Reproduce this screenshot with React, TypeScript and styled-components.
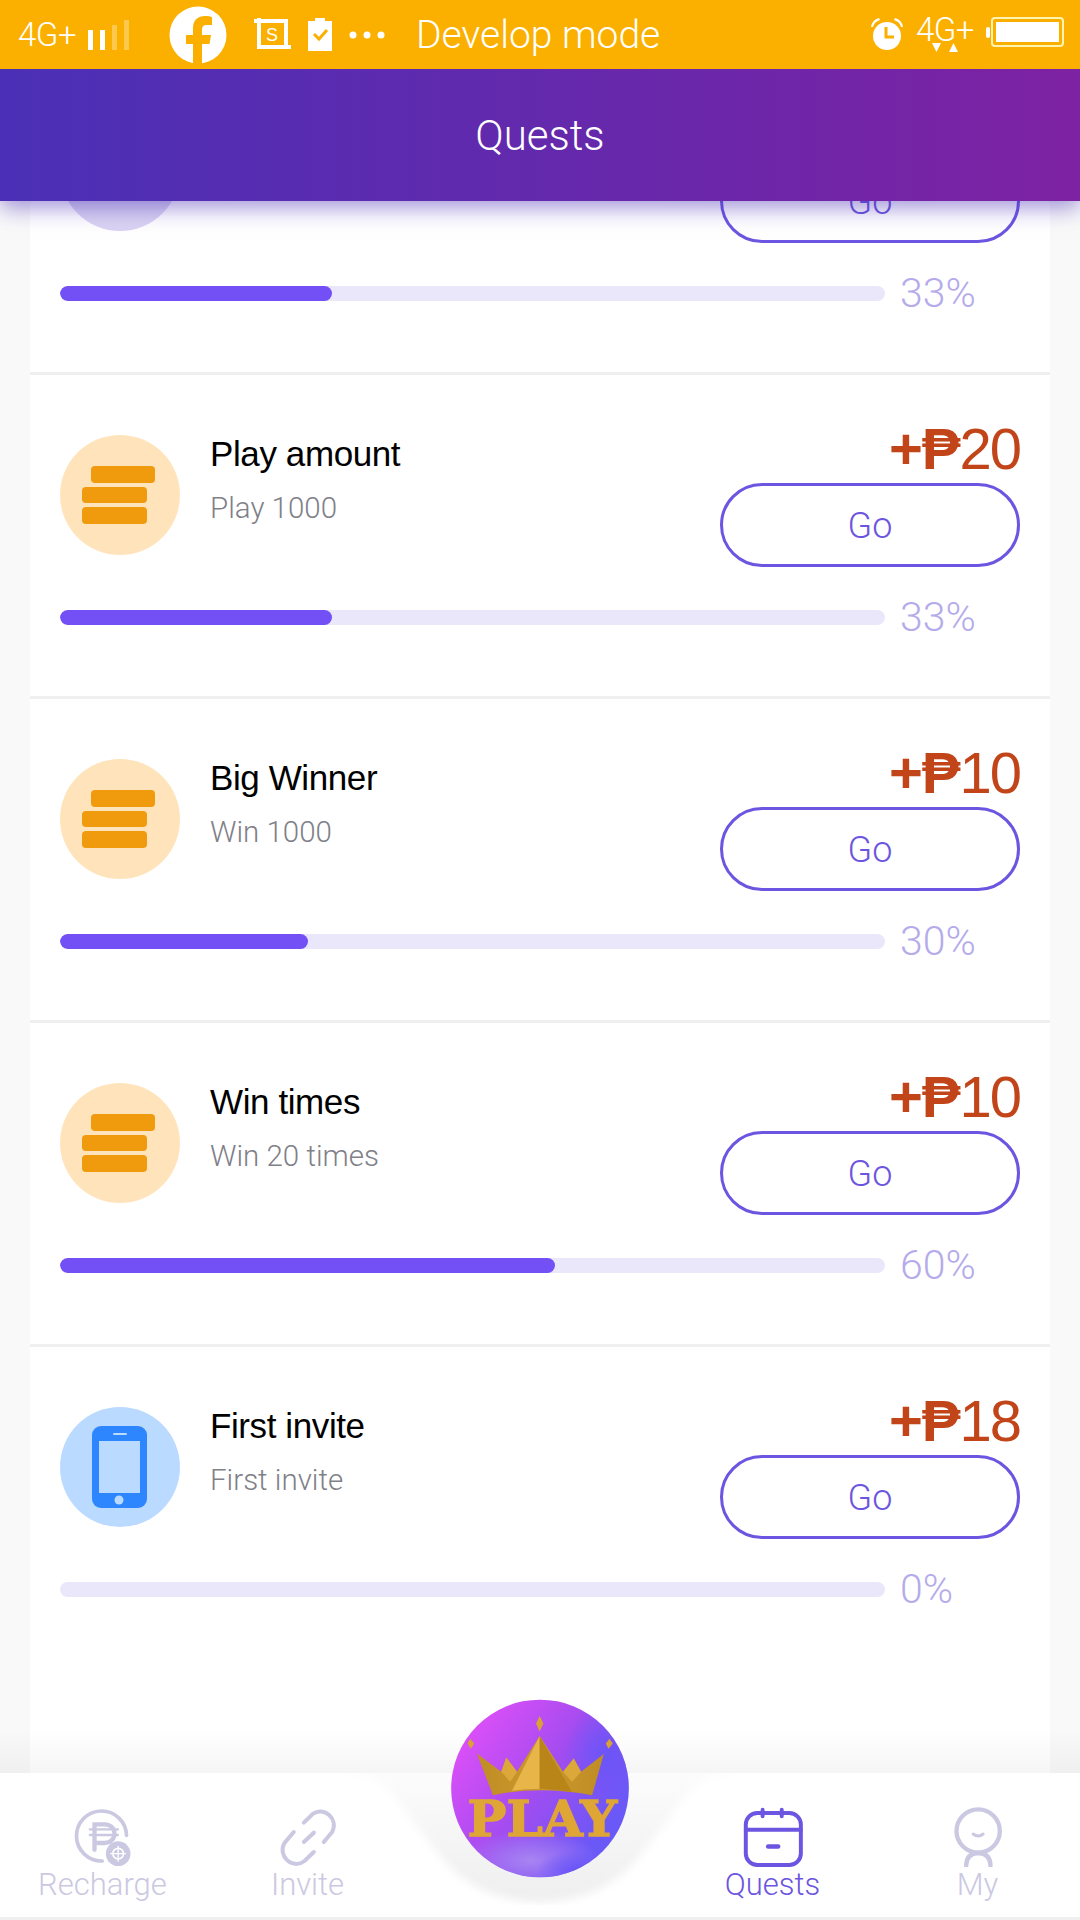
import { createGlobalStyle, styled } from "styled-components";

const GlobalStyle = createGlobalStyle`
  html, body {
    margin: 0;
    padding: 0;
    background: #f9f9f9;
  }
  * {
    box-sizing: border-box;
  }
`;

const LIGHT = `Roboto, "Liberation Sans", sans-serif`;
const SANS = `"Liberation Sans", Arial, sans-serif`;

const Page = styled.div`
  position: relative;
  display: flex;
  flex-direction: column;
  width: 1080px;
  height: 1920px;
  overflow: hidden;
  background: #f9f9f9;
`;

const StatusBar = styled.div`
  position: relative;
  z-index: 3;
  display: flex;
  align-items: center;
  flex-shrink: 0;
  padding: 0 16px 0 18px;
  height: 69px;
  background: #fbb000;
  color: #fff;
`;

const StatusNet = styled.span`
  font-family: ${LIGHT};
  font-size: 33px;
  font-weight: 300;
  letter-spacing: -0.5px;
`;

const StatusMode = styled.span`
  margin-left: 31px;
  font-family: ${LIGHT};
  font-size: 39px;
  font-weight: 300;
`;

const StatusRight = styled.div`
  display: flex;
  align-items: flex-start;
  margin-left: auto;
  gap: 12px;
`;

const NetStack = styled.div`
  display: flex;
  flex-direction: column;
  align-items: center;
  line-height: 26px;
`;

const Header = styled.header`
  position: relative;
  z-index: 2;
  display: flex;
  justify-content: center;
  align-items: center;
  flex-shrink: 0;
  height: 132px;
  background: linear-gradient(90deg, #4a30b6 0%, #7d22a3 100%);
  box-shadow: 0 6px 22px rgba(74, 48, 182, 0.55);
  color: #fff;
  font-family: ${LIGHT};
  font-size: 42px;
  font-weight: 300;
`;

const List = styled.main`
  display: flex;
  flex-direction: column;
  margin: -150px 30px 0;
  background: #fff;
  flex: 1;
`;

const Row = styled.section`
  display: flex;
  flex-direction: column;
  flex-shrink: 0;
  padding: 60px 30px 0;
  height: 324px;
  border-bottom: 3px solid #efefef;

  &:last-child {
    border-bottom: none;
  }
`;

const RowTop = styled.div`
  display: flex;
  height: 158px;
`;

const Badge = styled.div<{ $tone: string }>`
  display: flex;
  flex-shrink: 0;
  width: 120px;
  height: 120px;
  border-radius: 50%;
  background: ${(props) => props.$tone};
`;

const Info = styled.div`
  display: flex;
  flex-direction: column;
  margin-left: 30px;
`;

const Title = styled.div`
  margin-top: -3px;
  color: #000;
  font-family: ${SANS};
  font-size: 35px;
  line-height: 44px;
  letter-spacing: -0.4px;
`;

const Sub = styled.div`
  margin-top: 14px;
  color: #808088;
  font-family: ${LIGHT};
  font-size: 29.5px;
  font-weight: 300;
  line-height: 36px;
`;

const Reward = styled.div`
  display: flex;
  flex-direction: column;
  align-items: flex-end;
  margin-left: auto;
  margin-top: -17px;
`;

const Price = styled.div`
  display: flex;
  align-items: baseline;
  height: 62px;
  color: #c2451a;
  font-family: ${SANS};
  font-size: 58px;
  line-height: 62px;
  letter-spacing: -2px;
`;

const PriceSign = styled.span`
  font-weight: 700;
  letter-spacing: -1px;
`;

const GoButton = styled.button`
  margin-top: 3px;
  padding: 1px 0 0;
  width: 300px;
  height: 84px;
  border: 3px solid #6c55e0;
  border-radius: 42px;
  background: #fff;
  color: #6c55e0;
  font-family: ${LIGHT};
  font-size: 36px;
  font-weight: 300;
`;

const ProgressRow = styled.div`
  display: flex;
  align-items: center;
`;

const Track = styled.div`
  flex-shrink: 0;
  width: 825px;
  height: 15px;
  border-radius: 8px;
  background: #ebe7fb;
  overflow: hidden;
`;

const Fill = styled.div`
  height: 100%;
  border-radius: 8px;
  background: #7350f5;
`;

const Percent = styled.span`
  margin-left: 15px;
  color: #b5abeb;
  font-family: ${LIGHT};
  font-size: 41px;
  font-weight: 300;
`;

const NavShade = styled.div`
  position: absolute;
  left: 0;
  right: 0;
  bottom: 147px;
  height: 44px;
  background: linear-gradient(180deg, rgba(0, 0, 0, 0), rgba(0, 0, 0, 0.04));
`;

const Nav = styled.nav`
  position: absolute;
  left: 0;
  right: 0;
  bottom: 0;
  display: grid;
  grid-template-columns: 205px 205px 260px 205px 205px;
  height: 147px;
`;

const NavShape = styled.svg`
  position: absolute;
  left: 0;
  top: 0;
`;

const NavItem = styled.div<{ $active?: boolean }>`
  position: relative;
  display: flex;
  flex-direction: column;
  align-items: center;
  padding-top: 34px;
  color: ${(props) => (props.$active ? "#6c55e0" : "#cbc8e2")};
  font-family: ${LIGHT};
  font-size: 31px;
  font-weight: 300;
  line-height: 34px;

  svg {
    display: block;
    margin-bottom: 1px;
  }
`;

const PlayButton = styled.svg`
  position: absolute;
  left: 451px;
  top: 1699px;
`;

const Stack = () => (
  <svg width="120" height="120" viewBox="0 0 120 120">
    <rect x="31" y="31" width="64" height="17" rx="4" fill="#f09a0e" />
    <rect x="22" y="52" width="65" height="16" rx="4" fill="#f09a0e" />
    <rect x="22" y="72" width="65" height="17" rx="4" fill="#f09a0e" />
  </svg>
);

const Phone = () => (
  <svg width="120" height="120" viewBox="0 0 120 120">
    <rect x="32" y="19" width="55" height="82" rx="9" fill="#2e86ff" />
    <rect x="39" y="34" width="41" height="52" fill="#bbdaff" />
    <rect x="53" y="26" width="14" height="2" rx="1" fill="#bbdaff" />
    <circle cx="59" cy="93" r="4.5" fill="#bbdaff" />
  </svg>
);

const RechargeIcon = () => (
  <svg width="62" height="60" viewBox="125 50 185 180" fill="none" stroke="currentColor" strokeLinecap="round">
    <path d="M288 135A75 75 0 1 0 215 212" strokeWidth="11" />
    <path d="M192 178V102H222C262 102 262 158 222 158H192" strokeWidth="13" />
    <path d="M178 117H262M178 134H262" strokeWidth="7" />
    <circle cx="263" cy="190" r="37" fill="currentColor" stroke="none" />
    <circle cx="263" cy="190" r="16" stroke="#fff" strokeWidth="5" />
    <path d="M263 168V212M241 190H285" stroke="#fff" strokeWidth="4" />
  </svg>
);

const InviteIcon = () => (
  <svg width="62" height="60" viewBox="740 50 185 180" fill="none" stroke="currentColor" strokeWidth="12" strokeLinecap="round">
    <path d="M820 97L848 70C880 48 925 85 905 125L880 155" />
    <path d="M790 125L762 158C740 195 785 240 822 212L850 185" />
    <path d="M820 155L850 127" />
  </svg>
);

const QuestsIcon = () => (
  <svg width="62" height="60" viewBox="125 52 185 182" fill="none" stroke="currentColor" strokeWidth="12" strokeLinecap="round">
    <rect x="135" y="70" width="167" height="158" rx="35" />
    <path d="M135 121H302" />
    <path d="M186 60V80M244 60V80" />
    <path d="M203 172H233" strokeWidth="14" />
  </svg>
);

const MyIcon = () => (
  <svg width="62" height="60" viewBox="740 50 185 180" fill="none" stroke="currentColor" strokeWidth="13" strokeLinecap="round">
    <circle cx="833" cy="122" r="65" />
    <path d="M818 131Q833 143 848 131" strokeWidth="9" />
    <path d="M797 226Q797 190 833 188Q870 190 870 226" />
  </svg>
);

type Quest = {
  title: string;
  sub: string;
  amount: string;
  percent: number;
  fill: number;
  icon: "stack" | "phone" | "none";
  tone: string;
};

const quests: Quest[] = [
  { title: "", sub: "", amount: "", percent: 33, fill: 272, icon: "none", tone: "#dad4f2" },
  { title: "Play amount", sub: "Play 1000", amount: "20", percent: 33, fill: 272, icon: "stack", tone: "#ffe4bb" },
  { title: "Big Winner", sub: "Win 1000", amount: "10", percent: 30, fill: 248, icon: "stack", tone: "#ffe4bb" },
  { title: "Win times", sub: "Win 20 times", amount: "10", percent: 60, fill: 495, icon: "stack", tone: "#ffe4bb" },
  { title: "First invite", sub: "First invite", amount: "18", percent: 0, fill: 0, icon: "phone", tone: "#bbdaff" },
];

function App() {
  return (
    <Page>
      <GlobalStyle />
      <StatusBar>
        <StatusNet>4G+</StatusNet>
        <svg width="42" height="32" viewBox="0 0 42 32" style={{ marginLeft: 11 }}>
          <rect x="1" y="11" width="5" height="20" fill="#fff" />
          <rect x="13" y="11" width="5" height="20" fill="#fff" />
          <rect x="25" y="6" width="5" height="25" fill="#fff" opacity="0.3" />
          <rect x="37" y="1" width="5" height="30" fill="#fff" opacity="0.3" />
        </svg>
        <svg width="58" height="58" viewBox="0 0 58 58" style={{ marginLeft: 40 }}>
          <circle cx="29" cy="29" r="28.5" fill="#fff" />
          <path
            d="M24 58V38H17V29H24V22C24 14 29 10 36 10C39 10 42 10.500 43 11V19H38C34 19 33 21 33 24V29H42L40.500 38H33V58Z"
            fill="#fbb000"
          />
        </svg>
        <svg width="40" height="34" viewBox="0 0 40 34" style={{ marginLeft: 25 }}>
          <path d="M2 3H34V31M7 0V29H39" fill="none" stroke="#fff" strokeWidth="4" />
          <text x="14" y="23" fill="#fff" fontFamily="Liberation Sans" fontSize="18">S</text>
        </svg>
        <svg width="24" height="33" viewBox="0 0 24 33" style={{ marginLeft: 16 }}>
          <path d="M0 3H7V0H17V3H24V33H0Z" fill="#fff" />
          <path d="M6 16L11 21L19 12" fill="none" stroke="#fbb000" strokeWidth="3" />
        </svg>
        <svg width="36" height="8" viewBox="0 0 36 8" style={{ marginLeft: 17 }}>
          <circle cx="4" cy="4" r="3.500" fill="#fff" />
          <circle cx="18" cy="4" r="3.500" fill="#fff" />
          <circle cx="32" cy="4" r="3.500" fill="#fff" />
        </svg>
        <StatusMode>Develop mode</StatusMode>
        <StatusRight>
          <svg width="34" height="34" viewBox="0 0 34 34">
            <circle cx="17" cy="19" r="14" fill="#fff" />
            <path d="M1 10Q2 3 9 1L10 3Q4 5 3 10ZM33 10Q32 3 25 1L24 3Q30 5 31 10Z" fill="#fff" />
            <path d="M16 10V20H24" fill="none" stroke="#fbb000" strokeWidth="3" />
          </svg>
          <NetStack>
            <StatusNet>4G+</StatusNet>
            <svg width="26" height="9" viewBox="0 0 26 9">
              <path d="M0 0H9L4.500 9ZM17 9H26L21.500 0Z" fill="#fff" />
            </svg>
          </NetStack>
          <svg width="78" height="30" viewBox="0 0 78 30">
            <rect x="0" y="10" width="4" height="11" rx="2" fill="#fff" />
            <rect x="6" y="1" width="71" height="28" rx="3" fill="none" stroke="#fff3b0" strokeWidth="2" />
            <rect x="10" y="5" width="63" height="20" fill="#fff" />
          </svg>
        </StatusRight>
      </StatusBar>
      <Header>Quests</Header>
      <List>
        {quests.map((quest, index) => (
          <Row key={index}>
            <RowTop>
              <Badge $tone={quest.tone}>
                {quest.icon === "stack" && <Stack />}
                {quest.icon === "phone" && <Phone />}
              </Badge>
              <Info>
                <Title>{quest.title}</Title>
                <Sub>{quest.sub}</Sub>
              </Info>
              <Reward>
                <Price>
                  {quest.amount && <PriceSign>+₱</PriceSign>}
                  {quest.amount}
                </Price>
                <GoButton>Go</GoButton>
              </Reward>
            </RowTop>
            <ProgressRow>
              <Track>
                <Fill style={{ width: quest.fill }} />
              </Track>
              <Percent>{quest.percent}%</Percent>
            </ProgressRow>
          </Row>
        ))}
      </List>
      <NavShade />
      <Nav>
        <NavShape width="1080" height="147" viewBox="0 0 1080 147">
          <defs>
            <linearGradient id="notch" x1="0" y1="0" x2="0" y2="1">
              <stop offset="0" stopColor="#fcfcfc" />
              <stop offset="1" stopColor="#eeeeee" />
            </linearGradient>
            <filter id="soft" filterUnits="userSpaceOnUse" x="-20" y="-20" width="1120" height="187">
              <feGaussianBlur stdDeviation="4" />
            </filter>
          </defs>
          <rect x="340" width="400" height="132" fill="url(#notch)" />
          <path
            d="M-20 -20H350V0C375 0 390 15 405 37L441 84C465 115 505 129 540 129C575 129 615 115 639 84L675 37C690 15 705 0 730 0V-20H1100V164H-20Z"
            fill="#fff"
            filter="url(#soft)"
          />
          <path d="M0 0H340V144H0ZM740 0H1080V144H740Z" fill="#fff" />
          <rect y="132" width="1080" height="12" fill="#fff" />
          <rect y="144" width="1080" height="3" fill="#efefef" />
        </NavShape>
        <NavItem>
          <RechargeIcon />
          Recharge
        </NavItem>
        <NavItem>
          <InviteIcon />
          Invite
        </NavItem>
        <span />
        <NavItem $active>
          <QuestsIcon />
          Quests
        </NavItem>
        <NavItem>
          <MyIcon />
          My
        </NavItem>
      </Nav>
      <PlayButton width="178" height="179" viewBox="93 57 532 536">
        <defs>
          <linearGradient id="disc" x1="0.1" y1="0.2" x2="0.85" y2="0.75">
            <stop offset="0" stopColor="#d94ff7" />
            <stop offset="0.5" stopColor="#a44cf0" />
            <stop offset="1" stopColor="#6a58f7" />
          </linearGradient>
          <radialGradient id="blotch">
            <stop offset="0" stopColor="#a884f2" />
            <stop offset="1" stopColor="#a884f2" stopOpacity="0" />
          </radialGradient>
          <radialGradient id="blue">
            <stop offset="0" stopColor="#6a55f7" />
            <stop offset="1" stopColor="#6a55f7" stopOpacity="0" />
          </radialGradient>
          <linearGradient id="wing" x1="0" y1="0" x2="1" y2="0">
            <stop offset="0" stopColor="#c08d24" />
            <stop offset="0.5" stopColor="#c9982c" />
            <stop offset="1" stopColor="#c08d24" />
          </linearGradient>
          <clipPath id="discClip">
            <circle cx="359" cy="325" r="266" />
          </clipPath>
        </defs>
        <circle cx="359" cy="325" r="266" fill="url(#disc)" />
        <g clipPath="url(#discClip)">
          <ellipse cx="330" cy="540" rx="210" ry="90" fill="url(#blotch)" />
          <ellipse cx="560" cy="230" rx="130" ry="170" fill="url(#blue)" />
          <ellipse cx="470" cy="570" rx="120" ry="60" fill="url(#blue)" />
        </g>
        <path
          d="M170 220L243 275L258 232L290 275L358 168L428 275L460 235L482 275L550 222L515 345Q360 315 218 345Z"
          fill="url(#wing)"
        />
        <path d="M358 168L275 332Q315 326 358 326Z" fill="#e8b548" />
        <path d="M358 168V326Q410 328 455 336Z" fill="#b98518" />
        <path d="M258 232L290 275L270 305L243 275Z" fill="#dda83a" />
        <path d="M460 235L482 275L455 305L428 275Z" fill="#dda83a" />
        <path d="M358 108L369 130L358 154L347 130Z" fill="#d9a234" />
        <path d="M150 176L162 190L152 206L142 190Z" fill="#d9a234" />
        <path d="M567 176L577 190L564 206L556 190Z" fill="#d9a234" />
        <text
          x="142"
          y="468"
          fill="#dfa636"
          stroke="#dfa636"
          strokeWidth="4"
          fontFamily="DejaVu Serif"
          fontWeight="700"
          fontSize="144"
          textLength="448"
          lengthAdjust="spacingAndGlyphs"
        >
          PLAY
        </text>
      </PlayButton>
    </Page>
  );
}

export default App;
